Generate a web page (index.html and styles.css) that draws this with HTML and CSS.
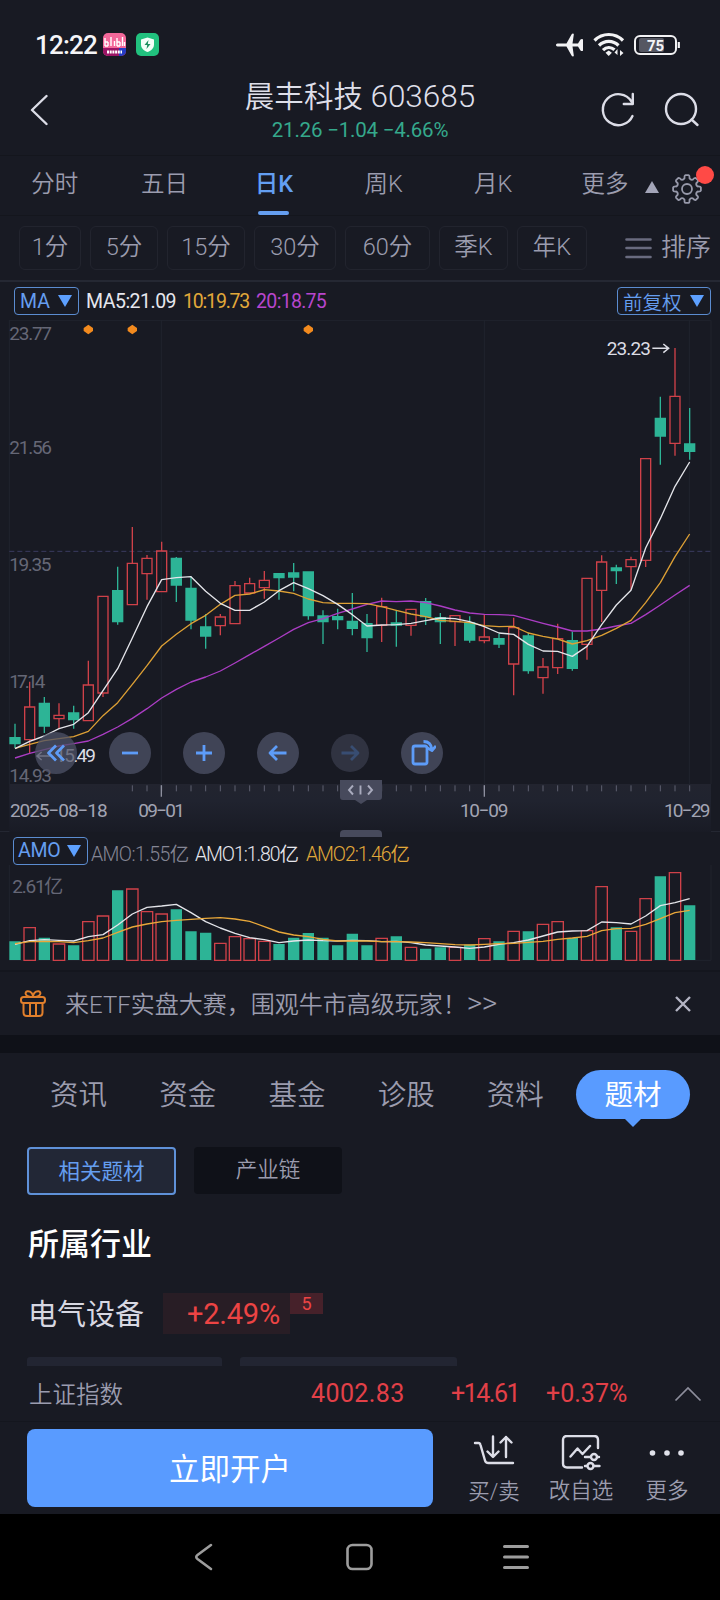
FILE: index.html
```html
<!DOCTYPE html>
<html lang="zh-CN">
<head>
<meta charset="utf-8">
<title>晨丰科技 603685</title>
<link rel="stylesheet" href="styles.css">
</head>
<body>
<div class="phone">
  <div class="status">
    <span class="clock">12:22</span>
    <svg class="app" width="23" height="23" viewBox="0 0 23 23">
      <defs><clipPath id="r"><rect width="23" height="23" rx="5"/></clipPath></defs>
      <g clip-path="url(#r)"><rect width="23" height="23" fill="#f3689a"/><path d="M0 15h23v8H0z" fill="#9b1465"/><path d="M16 15h7v8h-7z" fill="#233cc4"/></g>
      <g fill="none" stroke="#fff" stroke-width="1.4"><path d="M2 5v8M5 9v4M8 4v9M11.500 8v5M14 5v8M17 9v4M19.500 4v9M21.500 9v4"/><path d="M2 13h3M14 13h3M2 9h3M14 9h3" /><path d="M4 19h15" stroke-width="3" stroke-dasharray="2 .7"/></g>
    </svg>
    <svg class="app2" width="23" height="23" viewBox="0 0 23 23"><rect width="23" height="23" rx="5" fill="#21c17e"/><path d="M11.500 4.500l6.500 2v5c0 3.500-2.500 6-6.500 7.500C7.500 17.500 5 15 5 11.500v-5z" fill="#f4fff9"/><path d="M12.500 7l-4 5h2.700l-.7 4 4-5h-2.700z" fill="#1c8f60"/></svg>
    <span class="grow"></span>
    <svg width="28" height="24" viewBox="0 0 28 24" fill="#f2f2f4"><path d="M1.500 10.500h9L15.500 1.500c.7-1.300 2.500-1.300 2.300 0L16.500 10.500h5.500l2.500-4c.7-.9 2.500-.8 2.500.3v10.400c0 1.100-1.800 1.200-2.500.3l-2.500-4h-5.500l1.300 9c.2 1.300-1.600 1.300-2.300 0L10.500 13.500h-9c-2 0-2-3 0-3z"/></svg>
    <svg class="wifi" width="32" height="25" viewBox="0 0 32 25"><g fill="none" stroke="#f2f2f4" stroke-width="3.200"><path d="M1.500 8.500c8-8 20.500-8 28.500 0"/><path d="M6 13.500c5.500-5.500 14-5.500 19.500 0"/><path d="M10 18.200c3.500-3.500 8-3.500 11.500-.4"/></g><path d="M15.700 18.500l3.200 2.200-3.200 3.300-3.200-3.300z" fill="#f2f2f4"/><path d="M24.500 17v6l-3-2.500zM27 24v-6l3.500 3z" fill="#f2f2f4"/></svg>
    <svg class="battery" width="47" height="22" viewBox="0 0 47 22"><rect x="5" y="4" width="25" height="14" rx="2" fill="#555762"/><rect x="1" y="2" width="41" height="18" rx="5" fill="none" stroke="#f2f2f4" stroke-width="2"/><path d="M44.800 8v6" stroke="#f2f2f4" stroke-width="2.200"/><text x="21.500" y="16.500" text-anchor="middle" class="pct">75</text></svg>
  </div>

  <header class="head">
    <svg width="18" height="32" viewBox="0 0 18 32"><path d="M16.500 2L2 16l14.500 14" class="ico"/></svg>
    <div class="title">
      <h1>晨丰科技 <b>603685</b></h1>
      <p>21.26 −1.04 −4.66%</p>
    </div>
    <div class="head-icons">
      <svg width="36" height="36" viewBox="0 0 36 36"><path d="M32.500 24A15.500 15.500 0 1 1 31.500 9.500M32.800 2v10h-9" class="ico"/></svg>
      <svg width="36" height="36" viewBox="0 0 36 36"><circle cx="17" cy="17" r="15" class="ico"/><path d="M27.500 27.500L33.500 33" class="ico"/></svg>
    </div>
  </header>

  <nav class="tabs">
    <span>分时</span><span>五日</span><span class="on">日K</span><span>周K</span><span>月K</span>
    <span class="more">更多</span>
    <svg class="tri" width="14" height="12" viewBox="0 0 14 12"><path d="M7 0l7 12H0z" fill="#a3a5b8"/></svg>
    <div class="gear">
      <svg width="32" height="32" viewBox="-16 -16 32 32" fill="none" stroke="#9799aa" stroke-width="1.800" stroke-linejoin="round"><circle r="5"/><path id="gear"/></svg>
      <i class="dot"></i>
    </div>
  </nav>

  <div class="periods">
    <span class="w62">1分</span><span class="w67">5分</span><span class="w78">15分</span><span class="w82">30分</span><span class="w85">60分</span><span class="w69">季K</span><span class="w71">年K</span>
    <svg width="28" height="22" viewBox="0 0 28 22"><path d="M1.500 2.500h24M1.500 11h24M1.500 20h24" stroke="#696b7f" stroke-width="2.600" stroke-linecap="round"/></svg>
    <em>排序</em>
  </div>

  <div class="legend">
    <span class="drop">MA <i></i></span>
    <span class="v white">MA5:21.09</span><span class="v gold">10:19.73</span><span class="v violet">20:18.75</span>
    <span class="drop right">前复权 <i></i></span>
  </div>

  <div class="price">
    <svg id="price" width="720" height="464" viewBox="0 120 2160 1392">
      <path d="M28 121H2133V1512M28 120V1512M484 120V1512M1453 120V1512M2068 120V1512" class="grid"/>
      <path d="M28 814H2133" class="mid"/>
      <g class="ylab">
        <text x="28" y="180" textLength="128">23.77</text><text x="28" y="523" textLength="128">21.56</text>
        <text x="28" y="873" textLength="126">19.35</text><text x="28" y="1223" textLength="108">17.14</text>
        <text x="28" y="1505" textLength="128">14.93</text>
      </g>
      <g fill="#f28a1e"><path id="d" d="M265 134l14 10v9l-14 10-14-10v-9z"/><use href="#d" x="132"/><use href="#d" x="660"/></g>
      <g id="candles"></g>
      <g class="note"><text x="1820" y="226" textLength="133">23.23</text><path d="M1957 205h48m-15-13l16 13-16 13"/><text x="166" y="1447" textLength="122">15.49</text><path d="M150 1428h-38m13-12l-14 12 14 12"/></g>
    </svg>
    <div class="controls">
      <span><svg viewBox="-14 -14 28 28"><path d="M0-7.500L-7.500 0 0 7.500M8-7.500L.5 0 8 7.500"/></svg></span>
      <span><svg viewBox="-14 -14 28 28"><path d="M-8 0H8"/></svg></span>
      <span><svg viewBox="-14 -14 28 28"><path d="M-8 0H8M0-8V8"/></svg></span>
      <span><svg viewBox="-14 -14 28 28"><path d="M8.500 0H-8M-1-7L-8 0-1 7"/></svg></span>
      <span class="off"><svg viewBox="-14 -14 28 28"><path d="M-8.500 0H8M1-7L8 0 1 7"/></svg></span>
      <span><svg viewBox="-14 -14 28 28"><rect x="-9" y="-7" width="14" height="18" rx="2"/><path d="M1.500-11.500c5 0 8 3 8.500 8.500M5.500-5L10-2.500 14-7"/></svg></span>
    </div>
  </div>

  <div class="axis">
    <svg width="720" height="48" viewBox="0 0 2160 144">
      <defs><linearGradient id="ag" x1="0" y1="0" x2="0" y2="1"><stop offset="0" stop-color="#22242f"/><stop offset=".35" stop-color="#20232f"/><stop offset="1" stop-color="#191b25"/></linearGradient></defs>
      <rect x="28" width="2105" height="144" fill="url(#ag)"/>
      <path id="ticks" stroke="#5e6070" stroke-width="3"/>
      <path d="M484 4v34M1453 4v34" stroke="#8d8f9e" stroke-width="4"/>
      <g class="date"><text x="30" y="99" textLength="293">2025−08−18</text><text x="415" y="99" textLength="140">09−01</text><text x="1380" y="99" textLength="145">10−09</text><text x="1992" y="99" textLength="139">10−29</text></g>
    </svg>
    <svg class="handle" width="42" height="24" viewBox="0 0 42 24"><path d="M0 0h42v17q0 3-3 3H27l-6 4-6-4H3q-3 0-3-3z" fill="#474a5c"/><path d="M13 5.500l-4 4.500 4 4.500M20.500 5.500v9M28 5.500l4 4.500-4 4.500" fill="none" stroke="#a9abbd" stroke-width="1.900"/></svg>
    <i class="grip"></i>
  </div>

  <div class="amo">
    <span class="drop">AMO <i></i></span>
    <span class="a grey">AMO:1.55亿</span><span class="a white">AMO1:1.80亿</span><span class="a gold">AMO2:1.46亿</span>
  </div>
  <svg id="vol" class="vol" width="720" height="100" viewBox="0 375 2160 300">
    <path d="M28 375V661H2133V375" class="grid"/>
    <text class="ylab" x="37" y="458" textLength="153">2.61亿</text>
    <g id="bars"></g>
  </svg>

  <div class="promo">
    <svg width="26" height="28" viewBox="0 0 26 28" fill="none" stroke="#e07f2c" stroke-width="2"><rect x="1" y="7" width="24" height="6" rx="2.500"/><path d="M3.500 13v9.500q0 3.500 3.500 3.500h12q3.500 0 3.500-3.500V13M10 13v13M16 13v13M13 7C5 7 4 2 7.500 1.300 11 1 13 4 13 7c0-3 2-6 5.500-5.700C22 2 21 7 13 7z"/></svg>
    <p>来ETF实盘大赛，围观牛市高级玩家！<u>&gt;&gt;</u></p>
    <svg width="18" height="18" viewBox="0 0 18 18"><path d="M2 2l14 14M16 2L2 16" stroke="#b4b5c4" stroke-width="2.400"/></svg>
  </div>
  <div class="gap"></div>

  <nav class="topics"><span>资讯</span><span>资金</span><span>基金</span><span>诊股</span><span>资料</span><span class="pill">题材</span></nav>
  <div class="chips"><span class="chip on">相关题材</span><span class="chip">产业链</span></div>
  <h2>所属行业</h2>
  <div class="industry"><span class="name">电气设备</span><span class="rate">+2.49%</span><span class="rank">5</span></div>
  <div class="cards"><i></i><i></i></div>

  <div class="index">
    <span class="iname">上证指数</span><span class="i1">4002.83</span><span class="i2">+14.61</span><span class="i3">+0.37%</span>
    <svg width="28" height="16" viewBox="0 0 28 16"><path d="M1.500 14.500L14 2l12.500 12.500" fill="none" stroke="#8d8e9c" stroke-width="1.700"/></svg>
  </div>
  <footer class="actions">
    <button>立即开户</button>
    <div class="act a1"><svg width="42" height="36" viewBox="0 0 42 36"><path d="M2 8h3.500q1.500 0 2 2l4.500 15.500q.6 2.500 3.500 2.500H40M20 1.500v20M14.500 16.500l5.500 5.500 5.500-5.500M33 22V2M27.500 7.500L33 2l5.500 5.500" class="ico"/></svg><span>买/卖</span></div>
    <div class="act a2"><svg width="42" height="36" viewBox="0 0 42 36"><path d="M22 31.500H7q-4 0-4-4V4q0-4 4-4h27q4 0 4 4v8M10.500 20.500l7-8 5 5.500 7.500-8M25 21h5.500m8.500 0h-2M25 30h2m6.500 0H39.500" transform="translate(0 1)" class="ico"/><circle cx="34" cy="22" r="3" class="ico"/><circle cx="30.500" cy="31" r="3" class="ico"/></svg><span>改自选</span></div>
    <div class="act a3"><svg width="42" height="36" viewBox="0 0 42 36" fill="#e0e1ea"><circle cx="6.500" cy="18" r="2.800"/><circle cx="21" cy="18" r="2.800"/><circle cx="35" cy="18" r="2.800"/></svg><span>更多</span></div>
  </footer>
  <div class="navbar">
    <svg width="360" height="30" viewBox="0 0 360 30" fill="none" stroke="#9d9d9d" stroke-width="2.600" stroke-linecap="round" stroke-linejoin="round"><path d="M31 3L17.500 13q-2.500 2 0 4L31 27"/><rect x="167.500" y="3" width="24" height="24" rx="5"/><path d="M324.500 4.500h23M324.500 15h23M324.500 25.500h23" stroke-width="3"/></svg>
  </div>
</div>
<script src="chart.js"></script>
</body>
</html>
```
FILE: styles.css
```css
* { box-sizing: border-box; margin: 0; padding: 0; }
body { background: #181a23; }
i, em, u { font-style: normal; text-decoration: none; }
.phone { width: 720px; height: 1600px; overflow: hidden; background: #181a23; color: #9b9cae; font-family: Roboto, "Noto Sans CJK SC", sans-serif; font-weight: 350; white-space: nowrap; display: flex; flex-direction: column; }
.phone > * { flex: none; }
.ico { fill: none; stroke: #dcdde7; stroke-width: 2.4; stroke-linecap: round; stroke-linejoin: round; }
.grow { flex: 1; }

.status { height: 72px; padding: 17px 39px 0 35px; display: flex; align-items: center; }
.clock { color: #f5f5f7; font-weight: 500; font-size: 26px; letter-spacing: -.8px; width: 68px; }
.app2 { margin-left: 10px; }
.wifi { margin-left: 9px; }
.battery { margin-left: 9px; }
.pct { font-size: 15px; font-weight: 700; fill: #f5f5f7; }

.head { height: 84px; padding: 0 20px 8px 30px; display: flex; align-items: center; justify-content: space-between; border-bottom: 1px solid #14161d; }
.title { text-align: center; margin-left: 72px; }
.title h1 { font-size: 29.5px; line-height: 40px; font-weight: 350; color: #dedfe9; letter-spacing: .1px; }
.title b { font-size: 31.5px; font-weight: 350; letter-spacing: 0; }
.title p { font-size: 20.5px; line-height: 26px; color: #35a98c; font-weight: 400; letter-spacing: -.2px; }
.head-icons { display: flex; gap: 28px; margin-right: 0; align-items: center; }

.tabs { height: 60px; display: flex; border-bottom: 1px solid #14161d; font-size: 23.5px; align-items: stretch; }
.tabs > span { width: 109.6px; text-align: center; line-height: 56px; }
.tabs .on { color: #639ff2; font-weight: 500; display: flex; flex-direction: column; align-items: center; }
.tabs .on::after { content: ""; width: 31px; height: 5px; border-radius: 3px; background: #659ef0; margin-top: -1px; }
.tabs > .more { width: 97px; padding-left: 17px; }
.tri { margin: 25px 13px 0 0; }
.gear { position: relative; padding-top: 17px; margin-left: -1px; }
.dot { position: absolute; left: 25px; top: 10px; width: 18px; height: 18px; border-radius: 50%; background: #ff4a46; }

.periods { height: 64px; display: flex; align-items: center; padding-left: 19px; gap: 9px; font-size: 23.5px; }
.periods span { height: 44px; line-height: 41px; border: 1px solid #22242e; border-radius: 6px; text-align: center; }
.w62 { width: 62px; } .w67 { width: 68px; } .w78 { width: 78px; } .w82 { width: 82px; } .w85 { width: 85px; } .w69 { width: 69px; } .w71 { width: 70px; }
.periods svg { margin-left: 29px; }
.periods em { font-size: 25px; margin-left: -1px; line-height: 60px; }

.legend { height: 40px; border-top: 2px solid #252833; display: flex; align-items: center; padding: 0 9px 0 14px; }
.drop { height: 28px; display: flex; align-items: center; justify-content: space-between; width: 65px; padding: 0 6px 0 5px; border: 1px solid #5b8cd0; border-radius: 4px; color: #659ef0; font-size: 19.500px; font-weight: 400; }
.drop i { border: 7px solid transparent; border-top: 12px solid #5da0ff; border-bottom: 0; }
.right { width: 94px; margin-left: auto; font-weight: 350; }
.v { margin-left: 7px; font-weight: 400; letter-spacing: -.5px; font-size: 19.500px; }
.v + .v { margin-left: 7px; letter-spacing: -1.2px; }
.v + .violet { letter-spacing: -.7px; }
.white { color: #e6e7ee; } .gold { color: #e2a93a; } .violet { color: #b846cd; } .grey { color: #858695; }

.price { height: 464px; position: relative; }
.price > svg, .axis > svg:first-child, .vol { display: block; }
.grid { fill: none; stroke: #20232d; stroke-width: 3; }
.mid { fill: none; stroke: #3a3b60; stroke-width: 3; stroke-dasharray: 15 9; }
.ylab { fill: #656776; font-size: 57px; font-weight: 400; }
.note text { fill: #dcdde5; font-size: 57px; font-weight: 400; }
.note path { fill: none; stroke: #dcdde5; stroke-width: 4.500; }
.red { fill: none; stroke: #cf4149; stroke-width: 4; }
.green { fill: #2db496; stroke: #2db496; stroke-width: 4; }
.line { fill: none; stroke-width: 4; stroke-linejoin: round; }
.controls { position: absolute; left: 35px; top: 412px; display: flex; align-items: center; gap: 32px; }
.controls span { width: 42px; height: 42px; border-radius: 50%; background: rgba(78, 81, 102, .76); display: grid; place-items: center; }
.controls svg { width: 28px; height: 28px; fill: none; stroke: #5d9cf8; stroke-width: 2.8; stroke-linejoin: round; }
.controls .off { width: 38px; height: 38px; opacity: .6; }
.controls .off svg { opacity: .5; }

.axis { height: 48px; position: relative; border-bottom: 1px solid #242732; }
.date { fill: #a2a4b3; font-size: 57px; font-weight: 400; }
.handle { position: absolute; left: 340px; top: -4px; }
.grip { position: absolute; left: 340px; top: 46px; width: 42px; height: 7px; border-radius: 4px 4px 0 0; background: #474a5c; }

.amo { height: 33px; display: flex; align-items: center; padding-left: 13px; font-size: 19.5px; }
.amo .drop { width: 75px; padding: 0 6px 0 4px; margin-top: 4px; letter-spacing: -.2px; }
.a { margin: 7px 0 0 3px; width: 101px; font-weight: 350; letter-spacing: -.6px; }
.a + .a { width: 108px; letter-spacing: -1.1px; }

.promo { margin-top: 5px; height: 65px; border-top: 2px solid #14161e; display: flex; align-items: center; padding: 0 28px 0 20px; }
.promo p { flex: 1; margin: -3px 0 0 19px; font-size: 24px; letter-spacing: 0; }
.promo u { font-size: 30px; line-height: 20px; letter-spacing: -.5px; }
.gap { height: 18px; background: #0f1118; }

.topics { height: 94px; padding-left: 24px; display: flex; font-size: 28.5px; }
.topics span { width: 109.2px; text-align: center; line-height: 85px; }
.topics .pill { position: relative; width: 114px; height: 49px; line-height: 51px; margin: 17px 0 0 6px; border-radius: 25px; color: #fff; background: #599bff; font-weight: 400; }
.pill::after { content: ""; position: absolute; left: 49px; top: 49px; border: 8px solid transparent; border-top-color: #599bff; border-bottom: 0; }
.chips { display: flex; gap: 18px; padding-left: 27px; height: 64px; font-size: 21.500px; }
.chip { width: 148px; height: 47px; line-height: 46px; text-align: center; border-radius: 4px; background: #0f1118; }
.chip.on { width: 149px; height: 48px; background: #222736; color: #659ef0; border: 2px solid #5f91d8; font-weight: 400; }
h2 { font-size: 31px; line-height: 67px; height: 64px; padding-left: 28px; color: #fff; font-weight: 500; }
.industry { height: 82px; padding: 18px 0 0 28px; display: flex; align-items: flex-start; }
.name { font-size: 29px; line-height: 44px; color: #d7d8e2; font-weight: 400; width: 135px; }
.rate { width: 127px; height: 41px; background: #281d25; color: #ec4444; text-align: center; line-height: 42px; font-size: 29px; font-weight: 450; padding-left: 14px; letter-spacing: -.2px; }
.rank { width: 33px; height: 21px; background: #46212a; color: #ec4444; text-align: center; line-height: 22px; font-size: 18px; font-weight: 400; }
.cards { height: 9px; padding-left: 27px; display: flex; gap: 18px; }
.cards i { width: 195px; background: #222532; border-radius: 3px 3px 0 0; }
.cards i + i { width: 217px; }

.index { height: 56px; display: flex; align-items: center; padding-left: 29px; font-size: 23.500px; border-bottom: 1px solid #14161e; }
.iname { width: 282px; margin-top: -2px; }
.i1, .i2, .i3 { color: #e24048; font-size: 25px; font-weight: 400; letter-spacing: .4px; }
.i1 { width: 140px; } .i2 { width: 95px; letter-spacing: -1.5px; } .i3 { width: 128px; letter-spacing: 0; }
.actions { height: 92px; padding: 7px 0 0 27px; display: flex; }
.actions button { width: 406px; height: 78px; border: 0; border-radius: 8px; background: #599bff; color: #fff; font: 400 30.500px Roboto, "Noto Sans CJK SC", sans-serif; padding-bottom: 3px; }
.act { display: flex; flex-direction: column; align-items: center; width: 86px; font-size: 21.500px; padding-top: 6px; gap: 3px; }
.act span { line-height: 34px; }
.a1 { margin-left: 18px; } .a1 span { padding-top: 1px; }
.a2 { margin-left: 1px; }
.navbar { flex: 1 0 auto; background: #000; padding: 28px 0 0 180px; }
```
FILE: chart.js
```js
// Each candle: direction, high, body top, body bottom, low.
const candles = `g 1242 1281 1298 1310|r 1125 1196 1287 1327|g 1168 1185 1249 1268|r 1185 1219 1228 1256|g 1192 1212 1231 1256|r 1066 1134 1234 1234|r 886 886 1156 1168|g 803 870 957 965|r 692 793 909 909|r 770 779 822 895|r 733 759 873 873|g 776 779 854 902|g 830 863 952 978|g 935 972 997 1032|r 935 944 968 995|r 843 856 962 962|r 833 850 876 876|r 815 841 861 892|g 822 822 833 895|g 792 820 832 872|g 818 818 940 951|g 925 941 957 1019|g 920 943 951 978|g 876 956 975 995|g 935 962 1001 1042|r 889 915 967 1014|g 925 960 966 1027|r 920 922 967 996|g 890 901 943 966|g 932 945 957 1019|r 938 940 957 1025|g 942 960 1008 1015|r 935 1000 1010 1017|g 990 1004 1019 1030|r 945 973 1075 1163|g 987 997 1094 1102|r 1058 1084 1113 1158|r 962 1004 1085 1103|g 985 1010 1087 1094|r 835 835 1020 1063|r 771 790 869 958|g 797 806 814 851|r 775 783 803 868|r 500 500 785 804|g 327 387 437 517|r 190 326 457 492|g 358 459 480 503`.split('|').map(s => s.split(' '));
const ma5 = [1312,1292,1277,1256,1244,1211,1150,1088,1002,915,839,833,831,872,905,925,925,902,870,847,864,884,908,937,969,966,965,961,954,946,948,957,971,988,992,1020,1039,1040,1054,1026,965,910,869,750,668,578,510];
const ma10 = [1311,1300,1290,1284,1279,1264,1220,1183,1132,1080,1025,992,962,939,908,883,879,867,871,877,893,903,905,905,906,915,925,935,943,953,956,959,968,971,970,988,998,1005,1019,1010,995,975,953,903,847,775,711];
const ma20 = [1338,1325,1315,1305,1298,1291,1272,1252,1227,1200,1170,1146,1126,1112,1095,1072,1049,1026,1002,978,959,948,933,921,908,899,901,899,903,913,924,932,936,937,939,950,961,972,983,983,977,969,961,937,910,882,855];
const volume = [606,563,595,612,618,545,528,453,447,515,522,510,576,580,610,590,596,604,614,595,581,595,618,583,618,595,591,622,628,624,622,616,596,606,574,576,553,545,596,572,440,564,574,476,411,398,498];
const volDir = 'grgrgrrgrrrgggrrrrggggggg' + 'rgrggrgrgrgrrgrrgrrgrg';
const vma1 = [613,602,599,601,603,590,584,555,522,502,498,493,518,545,564,580,593,599,608,603,600,602,603,601,602,605,604,608,615,618,621,625,621,613,608,600,588,576,573,572,546,548,552,528,497,488,476];
const vma2 = [611,605,604,605,608,602,594,577,561,552,545,541,538,535,533,537,544,560,576,585,590,598,603,603,603,605,605,606,608,611,614,615,613,611,610,607,604,598,594,589,572,566,565,553,536,518,511];

const x = i => 45 + 44 * i;
const scale = v => Math.round(v * 15 / 14);
const line = (ys, color) => `<polyline class="line" stroke="${color}" points="${ys.map((y, i) => x(i) + ',' + y).join(' ')}"/>`;
const box = (i, top, bottom, h) => `M${x(i) - h} ${top}h${2 * h}V${bottom}h${-2 * h}z`;

document.getElementById('candles').innerHTML = candles.map(([dir, ...prices], i) => {
  const [high, top, bottom, low] = prices.map(scale);
  return `<path class="${dir === 'r' ? 'red' : 'green'}" d="M${x(i)} ${high}V${top}M${x(i)} ${bottom}V${low}${box(i, top, bottom, 15)}"/>`;
}).join('') + line(ma20.map(scale), '#ab3dc4') + line(ma10.map(scale), '#dda035') + line(ma5.map(scale), '#e4e5ea');

document.getElementById('bars').innerHTML = volume.map((top, i) =>
  `<path class="${volDir[i] === 'r' ? 'red' : 'green'}" d="${box(i, top, volDir[i] === 'r' ? 661 : 658, volDir[i] === 'r' ? 17 : 15)}"/>`
).join('') + line(vma1, '#e4e5ea') + line(vma2, '#e9a83a');

let ticks = '';
for (let i = 8; i < 47; i++) ticks += `M${x(i)} 4v18`;
document.getElementById('ticks').setAttribute('d', ticks);

// Eight-tooth gear outline with rounded valleys.
let d = '';
for (let k = 0; k < 8; k++) {
  const p = (r, a) => { const t = (k * 45 + a - 90) * Math.PI / 180; return `${(r * Math.cos(t)).toFixed(1)} ${(r * Math.sin(t)).toFixed(1)}`; };
  d += `${k ? 'L' : 'M'}${p(11, -13)}Q${p(14, -11)} ${p(14, -6)}L${p(14, 6)}Q${p(14, 11)} ${p(11, 13)}Q${p(9.5, 22.5)} ${p(11, 32)}`;
}
document.getElementById('gear').setAttribute('d', d + 'z');
```
